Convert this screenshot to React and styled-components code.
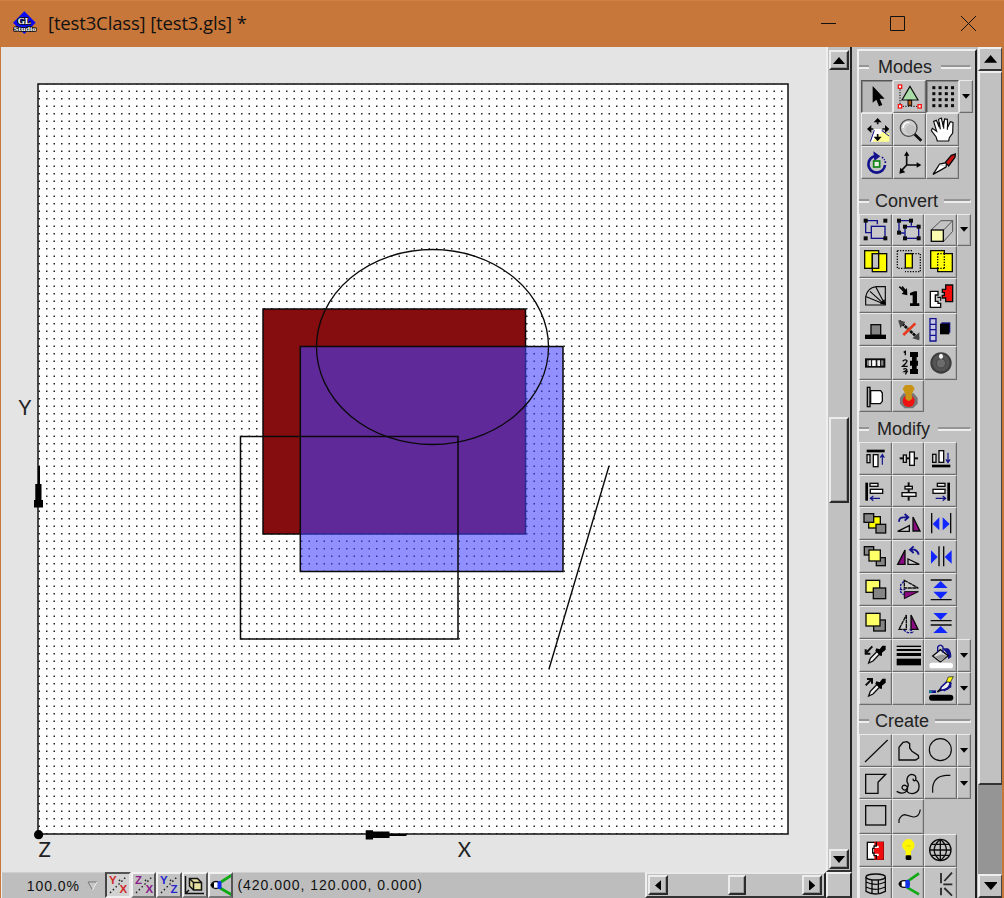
import React from "react";
import styled, { createGlobalStyle, css } from "styled-components";

const Global = createGlobalStyle`
  *, *::before, *::after { box-sizing: border-box; }
  html, body { margin: 0; width: 100%; height: 100%; overflow: hidden; }
  body { font-family: "Liberation Sans", Arial, sans-serif; color: #111; }
  svg { display: block; }
`;

const GREY = "#c1c1c1";

const Window = styled.div`
  width: 1004px;
  height: 898px;
  display: flex;
  flex-direction: column;
  background: #c8773b;
  overflow: hidden;
`;

const TitleBar = styled.header`
  flex: 0 0 47px;
  display: flex;
  align-items: center;
  padding: 0 0 2px 13px;
  border-top: 1px solid #d08145;
`;

const Title = styled.h1`
  flex: 1;
  margin: 0 0 0 11px;
  font: 400 18.5px/24px "Open Sans", "Noto Sans", sans-serif;
  letter-spacing: -0.15px;
  color: #111;
  white-space: pre;
`;

const WindowButtons = styled.div`
  display: flex;
  gap: 54px;
  padding-right: 27px;
  & > svg { overflow: visible; }
`;

const Body = styled.div`
  flex: 1;
  min-height: 0;
  display: flex;
  margin: 0 2px 0 1px;
  background: ${GREY};
`;

const Editor = styled.main`
  width: 851px;
  display: flex;
  flex-direction: column;
`;

const ViewRow = styled.div`
  height: 825px;
  display: flex;
`;

const Viewport = styled.div`
  width: 825px;
  height: 825px;
  background: #e4e4e4;
`;

const VerticalBar = styled.div`
  width: 26px;
  display: flex;
  flex-direction: column;
  align-items: center;
  padding: 3px 3px 1px 2px;
  background: ${GREY};
  border-left: 2px solid #efefef;
  border-right: 2px solid #222;
  border-bottom: 2px solid #333;
`;

const HorizontalBar = styled.div`
  width: 181px;
  display: flex;
  align-items: center;
  padding: 0 2px 0 1px;
  background: ${GREY};
  border-top: 2px solid #e8e8e8;
  border-left: 2px solid #efefef;
  border-right: 2px solid #222;
  border-bottom: 2px solid #333;
`;

const raised = css`
  background: #c2c2c2;
  border: 2px solid;
  border-color: #ececec #2b2b2b #2b2b2b #ececec;
  box-shadow: inset -1px -1px #999;
`;

const BarButton = styled.button`
  ${raised}
  flex: 0 0 auto;
  width: 20px;
  height: 20px;
  padding: 0;
  display: grid;
  place-items: center;
`;

const BarThumb = styled.div`
  ${raised}
  width: ${(p) => p.$w}px;
  height: ${(p) => p.$h}px;
`;

const Spacer = styled.div`
  flex: ${(p) => p.$size ? `0 0 ${p.$size}px` : "1"};
`;

const StatusRow = styled.footer`
  height: 26px;
  display: flex;
`;

const ZoomField = styled.div`
  width: 104px;
  display: flex;
  align-items: center;
  justify-content: flex-end;
  gap: 7px;
  padding: 0 7px 0 0;
  background: #bebebe;
  border-top: 1px solid #cfcfcf;
  border-left: 1px solid #efefef;
  font-size: 14px;
  letter-spacing: 0.95px;
`;

const ViewButton = styled.button`
  width: 25.7px;
  padding: 0;
  background: ${(p) => (p.$on ? "#d2d2d2" : "#c3c3c3")};
  border: 2px solid;
  border-color: ${(p) => (p.$on ? "#555 #e9e9e9 #eee #444" : "#f2f2f2 #555 #777 #f2f2f2")};
  overflow: hidden;
`;

const Coordinates = styled.div`
  flex: 1;
  padding: 0 0 0 4px;
  background: #bdbdbd;
  border-top: 1px solid #cfcfcf;
  font-size: 14px;
  line-height: 24px;
  letter-spacing: 0.97px;
  white-space: pre;
`;

const Corner = styled.div`
  width: 26px;
  background: #c4c4c4;
  border-top: 2px solid #eee;
  border-left: 2px solid #eee;
  border-right: 2px solid #222;
  border-bottom: 2px solid #333;
`;

const Palette = styled.aside`
  width: 120px;
  margin: 2px 0 0 5px;
  border-left: 2px solid #efefef;
  border-top: 2px solid #efefef;
  border-right: 2px solid #1c1c1c;
  display: flex;
  flex-direction: column;
  overflow: hidden;
`;

const Section = styled.section`
  flex: 0 0 auto;
  height: ${(p) => p.$h}px;
  padding-left: ${(p) => p.$indent || 0}px;
`;

const Heading = styled.h2`
  height: ${(p) => p.$h}px;
  margin: 0 0 0 ${(p) => -(p.$indent || 0)}px;
  padding-top: ${(p) => p.$top}px;
  width: 112px;
  display: flex;
  align-items: flex-start;
  gap: ${(p) => p.$gap}px;
  font-size: 18px;
  line-height: 20px;
  font-weight: 400;
  color: #222;

  &::before, &::after {
    content: "";
    height: 4px;
    margin-top: 8px;
    border-top: 2px solid #959595;
    border-bottom: 2px solid #ededed;
  }
  &::before { width: ${(p) => p.$lead}px; }
  &::after { flex: 1; border-right: 1px solid #ededed; }
`;

const Tools = styled.div`
  display: grid;
  grid-template-columns: 32.7px 32.7px 32.8px 14px;
  grid-template-rows: ${(p) => p.$rows};
`;

const Tool = styled.button`
  padding: 0;
  min-width: 0;
  min-height: 0;
  overflow: hidden;
  border: 1px solid;
  background: ${(p) => (p.$on ? "#b9b9b9" : "#c3c3c3")};
  border-color: ${(p) => (p.$on ? "#555 #e5e5e5 #e5e5e5 #555" : "#e9e9e9 #6c6c6c #6c6c6c #e9e9e9")};
  box-shadow: ${(p) => (p.$on ? "inset 1px 1px #888" : "inset -1px -1px #adadad")};
  display: grid;
  place-items: start;

  & > svg { margin: -1px; overflow: visible; }
`;

const Menu = styled(Tool)`
  place-items: center;
  & > svg { margin: 0; }
`;

const OuterBar = styled.div`
  width: 24px;
  margin-left: 1px;
  display: flex;
  flex-direction: column;
  background: #959595;
`;

const OuterPart = styled.div`
  flex: 0 0 ${(p) => p.$h}px;
  display: grid;
  place-items: center;
  background: ${GREY};
  border: solid;
  border-width: 2px 1px 2px 2px;
  border-color: #eee #444 #333 #eee;
`;

const ARROWS = {
  up: "M0 7 L6 0 L12 7Z",
  down: "M0 0 H12 L6 7Z",
  left: "M7 0 V12 L0 6Z",
  right: "M0 0 L7 6 L0 12Z",
};
const Arrow = ({ dir, s = 1 }) => {
  const side = dir === "left" || dir === "right";
  const w = side ? 7 : 12, h = side ? 12 : 7;
  return <svg width={w * s} height={h * s} viewBox={`0 0 ${w} ${h}`}><path d={ARROWS[dir]} /></svg>;
};

/* ---- icon helpers ---- */
const B = "#0b0b0b", N = "#12128c", Y = "#ffff00", PY = "#ffff66", G = "#858585", V = "#8a0a82", BL = "#1226ff";
const P = ({ d, c = B, f = "none", w = 4, ...r }) => <path d={d} stroke={c} fill={f} strokeWidth={w} {...r} />;
const R = ({ a, f = "none", c = B, w = 4, ...r }) => <rect x={a[0]} y={a[1]} width={a[2]} height={a[3]} fill={f} stroke={c} strokeWidth={w} {...r} />;
const S = ({ pts, f = B, s = 12 }) => pts.map(([x, y], i) => <rect key={i} x={x - s / 2} y={y - s / 2} width={s} height={s} fill={f} />);

/* icon units are thirds of a pixel; o is the origin of the button */
const MODES = [
  { on: 1, o: [20, 90], art: <path d="M55 108 V158 L66 149 L74 169 L84 165 L76 146 H91Z" /> },
  { o: [117, 90], art: <>
    <P d="M138 118 V164 M146 169 H190" w={3} strokeDasharray="4 4" />
    <P d="M168 109 L144 150 H192Z" f="#a8dba8" w={3.5} /><R a={[162, 151, 11, 15]} f="#b35b18" w={3} />
    {[[138, 110], [138, 169], [197, 169]].map(([x, y]) => <R key={x + y} a={[x - 5, y - 5, 10, 10]} f="#fff" c="#ff1717" />)}
  </> },
  { on: 1, menu: 1, o: [216, 90], art: <S s={9} pts={[0, 1, 2, 3].flatMap((i) => [0, 1, 2, 3].map((j) => [239.5 + i * 18.7, 113 + j * 18]))} /> },
  { o: [20, 188], art: <>
    <path d="M48 274 L62 236 L80 244 L105 249 V274Z" fill="#ffff91" />
    <path d="M48 274 L60 236 H82 V249 L62 262 L55 274Z" fill="#fff" />
    <P d="M48 274 L60 240 M82 240 L104 257" c={N} w={3} />
    <path d="M70 203 L82 216 H58Z M70 273 L58 259 H82Z M38 236 L51 224 V248Z M105 236 L92 224 V248Z" />
    <P d="M70 213 V222 M70 251 V262 M48 236 H57 M84 236 H94" w={5} />
  </> },
  { o: [117, 188], art: <><P d="M178 248 L202 271" w={8} /><circle cx="164" cy="233" r="25" fill="#cfcfcf" stroke="#444" strokeWidth="4" /><circle cx="170" cy="238" r="15" fill="#c1c1c1" /><P d="M147 233 Q149 215 166 216" c="#fff" /></> },
  { o: [216, 188], art: <P d="M250 272 L246 259 L232 241 L235 234 L248 243 L239 213 L247 210 L256 231 L254 207 L262 203 L268 230 L272 206 L280 207 L281 231 L289 214 L297 216 L296 248 L286 262 L284 272Z M256 216 L259 237 M269 212 V235 M281 216 L280 238" f="#fff" w={3.5} /> },
  { o: [20, 287], art: <><P d="M64 317 A25 25 0 1 0 92 344" c={N} w={8} /><path d="M57 303 L78 318 L60 332Z" fill={N} /><P d="M83 320 L91 329 M93 333 V340" c={N} w={5} strokeDasharray="5 4" /><R a={[58, 332, 18, 18]} f="#e8eee4" c="#138313" w={5} /></> },
  { o: [117, 287], art: <><P d="M158 314 V344 H190 M158 344 L143 360" w={5} /><path d="M158 303 L166 316 H150Z M202 344 L188 336 V352Z M136 370 L139 352 L154 366Z" /></> },
  { o: [216, 287], art: <><P d="M237 372 L257 341 L278 337 L276 350Z" f="#fff" w={4} /><P d="M274 336 L292 315 L304 311 L303 321 L284 347Z" f="#cb1212" w={4} /><P d="M257 343 L275 348" c="#aaa" w={2} /></> },
];

const CONVERT = [
  { o: [15, 86], art: <><P d="M35 106 H70 V117 M35 106 V142 H51" c={N} /><R a={[52, 123, 41, 36]} f="#c9c9c9" c={N} /><S pts={[[35, 106], [94, 106], [35, 159], [94, 159]]} /></> },
  { o: [113, 86], art: <><P d="M134 106 H171 V121 M134 106 V143 H151" c={N} /><R a={[152, 124, 41, 35]} f="#c9c9c9" c={N} /><S pts={[[134, 106], [170, 106], [134, 142], [152, 124], [193, 124], [152, 159], [193, 159]]} /></> },
  { menu: 1, o: [211, 86], art: <><P d="M233 133 L262 106 H297 V138 L270 168 M270 134 L297 106" c="#555" w={3} /><R a={[233, 134, 36, 34]} f="#fafbae" /></> },
  { o: [15, 183], art: <><R a={[32, 197, 42, 53]} f={Y} /><R a={[55, 206, 43, 54]} f={Y} /><R a={[55, 206, 19, 44]} f="#c1c1c1" /></> },
  { o: [113, 183], art: <><P d="M129 197 H175 M129 197 V250 H151 M175 206 H198 V260 H152" w={4} strokeDasharray="4 4" /><R a={[153, 206, 21, 43]} f={Y} /></> },
  { o: [211, 183], art: <><P d="M231 197 H272 V206 H296 V260 H252 V250 H231Z" f={Y} /><P d="M252 206 V250 M272 206 V250 M252 206 H272 M252 250 H272" w={4} strokeDasharray="4 4" /></> },
  { o: [15, 278], art: <><P d="M35 359 V334 Q40 308 66 304 H94 V359Z M37 334 L88 355 M48 318 L88 354 M66 306 L90 352" w={3.5} /><path d="M95 358 L78 356 L91 341Z" /></> },
  { o: [113, 278], art: <><P d="M135 304 L151 320 M143 304 L155 318" w={5} /><path d="M159 330 L142 326 L158 308Z" /><path d="M180 318 H188 V354 H195 V362 H167 V354 H175 V330 H167 V323Z" /></> },
  { o: [211, 278], art: <><P d="M230 318 H253 V329 H245 V348 H253 V354 H261 V366 H230Z" f="#fff" /><P d="M251 336 H261 V346" w={3.5} /><P d="M276 299 H297 V349 H276 V338 H266 V330 H272 V321 H266 V312 H276Z" f="#f20d0d" /></> },
  { o: [15, 26], art: <><R a={[51, 61, 29, 32]} f={G} /><rect x="33" y="91" width="63" height="13" /></> },
  { o: [113, 26], art: <><P d="M135 50 L193 103" w={8} strokeDasharray="9 2" /><path d="M132 47 L153 53 L138 71Z M195 84 V108 L174 102Z" fill="#444" /><P d="M147 92 L183 57" c="#e6391d" w={8} /></> },
  { o: [211, 26], art: <><P d="M229 43 H247 V110 H229Z M229 60 H247 M229 76 H247 M229 93 H247" f="#c7c7e3" c={N} w={4} /><rect x="263" y="54" width="27" height="31" fill={N} /><rect x="259" y="58" width="28" height="32" /></> },
  { o: [15, 125], art: <><R a={[36, 165, 55, 22]} f="#888" w={6} /><rect x="45" y="168" width="6" height="17" fill="#ddd" /><rect x="54" y="168" width="11" height="17" fill="#fff" /><rect x="71" y="168" width="7" height="17" fill="#eee" /><P d="M53 165 V187 M67 165 V187 M80 165 V187" w={3} /></> },
  { o: [113, 125], art: <><P d="M148 144 L153 141 V153 M145 171 Q153 163 158 170 Q158 174 145 186 H160 M147 195 Q154 190 158 197 L150 202 H158 L153 210" /><path d="M167 143 H191 V158 H187 V169 H191 V184 H187 V194 H191 V209 H167 V194 H173 V184 H167 V169 H173 V158 H167Z" /></> },
  { o: [211, 125], art: <><circle cx="262" cy="176" r="32" fill="#3c3c3c" /><circle cx="262" cy="175" r="26" fill="#555" /><circle cx="262" cy="177" r="14" fill="#6c6c6c" stroke="#444" strokeWidth="3" /><ellipse cx="262" cy="156" rx="6" ry="8" fill="#f6f6f6" /></> },
  { o: [15, 224], art: <><R a={[40, 246, 8, 58]} f="#aaa" /><P d="M50 256 H80 L85 263 V288 L79 295 H50Z" f="#fff" /></> },
  { o: [113, 224], art: <><path d="M147 264 H178 L190 278 V295 L176 309 H151 L137 295 V278Z" fill="#777" /><circle cx="163" cy="287" r="18" fill="#f01111" /><path d="M153 239 H173 L181 249 L172 268 L174 280 L163 288 L153 280 L154 268 L145 250Z" fill="#c99316" /></> },
];

const MODIFY = [
  { o: [15, 5], art: <><rect x="38" y="28" width="54" height="8" /><R a={[39, 43, 9, 24]} f="#ddd" /><R a={[58, 43, 14, 36]} f="#fff" /><P d="M85 73 V44 M79 52 L85 43 L91 52" c={N} w={3.5} /></> },
  { o: [113, 5], art: <><P d="M136 54 H191" w={6} /><R a={[147, 44, 9, 22]} f="#ddd" /><R a={[166, 35, 14, 40]} f="#fff" /></> },
  { o: [211, 5], art: <><R a={[237, 42, 10, 24]} f="#ddd" /><R a={[256, 31, 14, 35]} f="#fff" /><rect x="235" y="73" width="55" height="8" /><P d="M283 37 V65 M277 57 L283 67 L289 57" c={N} w={3.5} /></> },
  { o: [15, 104], art: <><rect x="34" y="127" width="8" height="54" /><R a={[48, 129, 24, 9]} f="#eee" /><R a={[49, 147, 37, 12]} f="#fff" /><P d="M50 174 H78 M58 167 L49 174 L58 181" c={N} w={3.5} /></> },
  { o: [113, 104], art: <><P d="M163 126 V181" w={6} /><R a={[152, 138, 22, 8]} f="#eee" /><R a={[143, 157, 42, 11]} f="#fff" /></> },
  { o: [211, 104], art: <><rect x="281" y="127" width="8" height="54" /><R a={[251, 129, 23, 9]} f="#eee" /><R a={[238, 147, 36, 12]} f="#fff" /><P d="M246 174 H275 M267 167 L276 174 L267 181" c={N} w={3.5} /></> },
  { o: [15, 204], art: <><R a={[44, 233, 35, 34]} f={Y} /><R a={[30, 224, 29, 26]} f={G} /><R a={[66, 256, 29, 26]} f={G} /></> },
  { o: [113, 204], art: <><P d="M134 248 Q134 235 148 235 H158 M151 225 L162 235 L151 245" c={N} w={5.5} /><P d="M130 277 L165 260 V277Z" f="#d3d3d3" /><P d="M176 234 V276 H197Z" f={V} /></> },
  { o: [211, 204], art: <><P d="M234 222 V283 M291 222 V283" /><path d="M257 235 V274 L237 255Z M267 235 V274 L288 255Z" fill={BL} /></> },
  { o: [15, 303], art: <><R a={[31, 323, 28, 25]} f={G} /><R a={[67, 356, 27, 24]} f={G} /><R a={[45, 333, 34, 33]} f={PY} /></> },
  { o: [113, 303], art: <><P d="M130 376 L152 333 V376Z" f={V} /><P d="M161 360 V376 H195Z" f="#d3d3d3" /><P d="M168 332 H181 Q191 336 193 347 M178 322 L167 332 L178 342" c={N} w={5.5} /></> },
  { o: [211, 303], art: <><P d="M256 322 V382 M270 322 V382" /><path d="M232 334 V374 L252 354Z M294 334 V374 L273 354Z" fill={BL} /></> },
  { o: [15, 10], art: <><R a={[36, 32, 41, 36]} f={PY} /><R a={[58, 55, 37, 32]} f={G} /></> },
  { o: [113, 10], art: <><P d="M150 32 L192 55 H150Z" f="#ccc" strokeDasharray="12 1.5" /><P d="M150 66 H192 L150 87Z" f={V} w={3} /><P d="M149 35 L139 45 V67 L148 75 M136 60 H153" c={N} strokeDasharray="8 3" /></> },
  { o: [211, 10], art: <><P d="M231 31 H294 M231 90 H294" /><path d="M261 34 L282 55 H239Z M239 66 H282 L261 88Z" fill={BL} /></> },
  { o: [15, 109], art: <><R a={[59, 151, 35, 33]} f={G} /><R a={[36, 131, 42, 38]} f={PY} /></> },
  { o: [113, 109], art: <><P d="M156 136 V179 H134Z" f="#ccc" strokeDasharray="12 1.5" /><P d="M170 136 V179 H191Z" f={V} /><P d="M148 181 L160 189 H174 M166 179 L177 188" c={N} strokeDasharray="8 3" /></> },
  { o: [211, 109], art: <><P d="M231 153 H294 M231 166 H294" /><path d="M239 130 H282 L261 151Z M261 169 L282 190 H239Z" fill={BL} /></> },
  { o: [15, 207], art: <><P d="M44 279 L49 265 L73 240 L80 249 L57 273Z" f="#eee" /><path d="M67 235 L77 238 L85 227 H95 V239 L84 248 V257 H78 L64 242Z" /><P d="M55 229 L36 249 M35 238 V251 H49" w={6} /></> },
  { o: [113, 207], art: <><rect x="127" y="227" width="73" height="4" /><rect x="127" y="237" width="73" height="6" /><rect x="127" y="249" width="73" height="9" /><rect x="127" y="266" width="73" height="20" /></> },
  { menu: 1, o: [211, 207], art: <><path d="M267 235 H283 Q293 241 293 261 L284 268 L279 250Z" fill={N} /><P d="M237 258 L260 239 L283 257 L260 276Z" f="#ddd" /><path d="M244 260 L263 274 L280 257 L265 253Z" fill="#999" /><P d="M252 246 V231 Q260 220 268 231 V248" c={N} /><rect x="227" y="278" width="71" height="17" rx="8" fill="#fff" /></> },
  { o: [15, 308], art: <><P d="M44 380 L49 366 L73 341 L80 350 L57 374Z" f="#eee" /><path d="M67 336 L77 339 L85 328 H95 V340 L84 349 V358 H78 L64 343Z" /><P d="M35 348 L52 331 M39 329 H54 V343" w={6} /></> },
  { o: [113, 308] },
  { menu: 1, o: [211, 308], art: <><P d="M258 364 L263 353 L283 334 L291 342 L281 359Z" f="#eee" c={N} w={5} /><P d="M270 364 L290 352 V338" c={N} w={6} /><path d="M278 337 L284 323 L299 322 L290 339Z" fill={Y} stroke={B} strokeWidth="2" /><P d="M226 367 H247" c={N} w={8} /><path d="M226 362 L238 368 L228 371Z" fill="#159b9b" /><P d="M251 368 L262 359" w={5} /><rect x="226" y="376" width="73" height="18" rx="9" /></> },
];

const CREATE = [
  { o: [15, 79], art: <P d="M33 163 L101 97" w={3.5} /> },
  { o: [113, 79], art: <P d="M134 157 V119 L146 104 L158 102 L166 108 V121 L173 131 L192 143 L193 151 L184 157Z" /> },
  { menu: 1, o: [211, 79], art: <circle cx="260" cy="126" r="33" fill="none" stroke={B} strokeWidth="3.5" /> },
  { o: [15, 177], art: <P d="M35 199 H95 L72 223 V256 H35Z" /> },
  { o: [113, 177], art: <P d="M127 250 Q147 262 158 248 Q163 236 153 232 Q143 230 143 240 Q150 251 157 243 Q166 231 158 222 Q156 202 171 199 Q188 200 184 216 Q177 222 176 212 M184 215 Q195 223 194 236 Q194 254 174 257 Q157 255 158 247" /> },
  { menu: 1, o: [211, 177], art: <P d="M237 254 V239 Q240 205 277 202 H290" w={3.5} /> },
  { o: [15, 277], art: <R a={[35, 297, 60, 58]} /> },
  { o: [113, 277], art: <P d="M134 349 V339 Q141 325 151 324 L177 331 Q194 332 198 309" w={3.5} /> },
  null,
  { o: [15, 380], art: <><R a={[40, 405, 48, 51]} f="#fff" /><path d="M61 403 H89 V457 H61 V446 H74 V439 H60 V422 H74 V415 H61Z" fill="#f00d0d" /><P d="M67 404 V416 H60 V423 H56 V437 H60 V445 H67 V456" w={4} /></> },
  { o: [113, 380], art: <><path d="M155 396 H170 L180 408 V420 L170 432 V445 H154 V432 L144 420 V408Z" fill="#fff600" /><P d="M155 416 H170" c="#ccc500" w={2} /><rect x="154" y="444" width="17" height="14" rx="4" /></> },
  { o: [211, 380], art: <><circle cx="260" cy="428" r="32" fill="none" stroke={B} strokeWidth="4" /><P d="M228 428 H292 M233 411 H287 M233 444 H287 M260 396 V460 M260 396 Q223 428 260 460 M260 396 Q297 428 260 460" w={4} /></> },
  { o: [15, 478], art: <><ellipse cx="65" cy="508" rx="29" ry="9" fill="none" stroke={B} strokeWidth="4" /><P d="M36 508 V551 Q64 567 94 551 V508 M36 523 Q64 537 94 523 M36 538 Q64 552 94 538 M54 516 V559 M73 516 V559" /></> },
  { o: [113, 478], art: <><P d="M194 497 L163 519 M158 539 L194 560" c="#12a916" w={8} /><ellipse cx="150" cy="529" rx="15" ry="10" fill="#fff" stroke={B} strokeWidth="4" /><rect x="153" y="516" width="13" height="26" rx="5" fill="#1232e8" /><path d="M132 529 L142 520 V538Z" /></> },
  { o: [211, 478], art: <P d="M262 496 V527 M262 540 V563 M295 495 L272 520 M269 530 H296 M272 541 L295 564" c="#2a2a2a" w={5.5} /> },
];

const Icon = ({ o, children }) => (
  <svg width="33" height="33" viewBox={`${o[0]} ${o[1]} 99 99`}>{children}</svg>
);

const ToolGrid = ({ tools, rows }) => (
  <Tools $rows={rows}>
    {tools.map((t, i) => t && (
      <React.Fragment key={i}>
        <Tool $on={t.on} style={{ gridColumn: (i % 3) + 1, gridRow: Math.floor(i / 3) + 1 }}>
          <Icon o={t.o}>{t.art}</Icon>
        </Tool>
        {t.menu && <Menu style={{ gridColumn: 4, gridRow: Math.floor(i / 3) + 1 }}><Arrow dir="down" s={0.68} /></Menu>}
      </React.Fragment>
    ))}
  </Tools>
);

const Logo = () => (
  <svg width="24" height="24" viewBox="0 0 72 72">
    <path d="M34 1 L68 35 L34 69 L0 35Z" fill="#0b0bed" />
    <g fontFamily="Liberation Serif, serif" fontWeight="700" textAnchor="middle" stroke="#111" strokeWidth="5" paintOrder="stroke" fill="#fff">
      <text x="34" y="39" fontSize="25" textLength="40" lengthAdjust="spacingAndGlyphs">GL</text>
      <text x="36" y="59" fontSize="17" textLength="68" lengthAdjust="spacingAndGlyphs">Studio</text>
    </g>
  </svg>
);

const Scene = () => (
  <svg width="825" height="825" viewBox="1 47 825 825">
    <defs>
      <pattern id="dots" x="38" y="83" width="15" height="15" patternUnits="userSpaceOnUse">
        <path d="M.5 0h1.5v1.5h-1.5z M8 0h1.5v1.5h-1.5z M.5 7.5h1.5v1.5h-1.5z M8 7.5h1.5v1.5h-1.5z" fill="#222" />
      </pattern>
    </defs>
    <rect x="38" y="84" width="750" height="750" fill="#fff" />
    <rect x="38" y="84" width="750" height="750" fill="url(#dots)" />
    <rect x="38" y="84" width="750" height="750" fill="none" stroke="#111" strokeWidth="1.5" />
    <g stroke="#0a0a0a" strokeWidth="1.5" fill="none">
      <rect x="263" y="309" width="262.5" height="225" fill="#850d0f" />
      <rect x="300.3" y="346.5" width="262.7" height="225" fill="rgba(67,62,255,.58)" />
      <rect x="240.5" y="436.5" width="217.5" height="202.5" />
      <ellipse cx="432.5" cy="347" rx="116" ry="97.5" strokeWidth="1.3" />
      <path d="M609 466 L549 669" strokeWidth="1.4" />
    </g>
    <path d="M34 500h9v7.5h-9z M35.3 484h6.2v16h-6.2z M38 466h2v18h-2z M365.7 830.3h7.3v9.2h-7.3z M373 831.5h16.5v6.5h-16.5z M389 834h17.5v2h-17.5z" />
    <circle cx="38.6" cy="834.7" r="4.6" />
    <g fontFamily="Lato, sans-serif" fontWeight="400" fontSize="20.5" fill="#222" textAnchor="middle">
      <text x="25" y="414.7">Y</text>
      <text x="464.5" y="857.3">X</text>
      <text x="44.7" y="857.3">Z</text>
    </g>
  </svg>
);

const PlaneArt = ({ a, b, c }) => (
  <svg width="22" height="22" viewBox="0 0 22 22">
    <path d="M3 19 L19 3 M12 7l2 -2" stroke="#222" strokeWidth="1.4" strokeDasharray="1.6 2.4" />
    <g fontFamily="Liberation Sans, sans-serif" fontSize="11.5" fontWeight="700" fill={c}>
      <text x="2" y="9.5">{a}</text><text x="12.5" y="19">{b}</text>
    </g>
  </svg>
);

export default function App() {
  return (
    <Window>
      <Global />
      <TitleBar>
        <Logo />
        <Title>[test3Class] [test3.gls] *</Title>
        <WindowButtons>
          {["M0 8.5H15", "M-.5 1.5H13.5V15.5H-.5Z", "M0 1L15 16M15 1L0 16"].map((d) => (
            <svg key={d} width="16" height="17"><path d={d} fill="none" stroke="#111" strokeWidth="1" /></svg>
          ))}
        </WindowButtons>
      </TitleBar>
      <Body>
        <Editor>
          <ViewRow>
            <Viewport><Scene /></Viewport>
            <VerticalBar>
              <BarButton><Arrow dir="up" /></BarButton>
              <Spacer $size={347} />
              <BarThumb $w={20} $h={86} />
              <Spacer />
              <BarButton><Arrow dir="down" /></BarButton>
            </VerticalBar>
          </ViewRow>
          <StatusRow>
            <ZoomField>
              <span>100.0%</span>
              <svg width="11" height="10" viewBox="0 0 11 10"><path d="M1 1H10L5.5 9Z" fill="#c9c9c9" stroke="#777" /><path d="M10 1L5.5 9" stroke="#fff" /></svg>
            </ZoomField>
            <ViewButton $on><PlaneArt a="Y" b="X" c="#d02a2a" /></ViewButton>
            <ViewButton><PlaneArt a="Z" b="X" c="#8b1a8b" /></ViewButton>
            <ViewButton><PlaneArt a="Y" b="Z" c="#2525cc" /></ViewButton>
            <ViewButton>
              <svg width="22" height="22" viewBox="0 0 22 22"><path d="M1.5 2V19.5H20M1.5 19.5L5 16" fill="none" stroke="#111" strokeWidth="1.5" /><path d="M5.5 4.500H13.500L17.500 8.500V16H9.500L5.500 12Z" fill="#e7e2a0" stroke="#111" strokeWidth="1.5" /><path d="M5.500 4.500L9.500 8.500H17.500M9.500 8.500V16" fill="none" stroke="#111" strokeWidth="1.5" /></svg>
            </ViewButton>
            <ViewButton>
              <svg width="22" height="22" viewBox="0 0 22 22"><path d="M22 1L11 8M10 14L22 21" stroke="#0dab13" strokeWidth="2.8" /><ellipse cx="6" cy="11" rx="4.5" ry="3.5" fill="#fff" stroke="#111" strokeWidth="1.3" /><rect x="7.5" y="7" width="4" height="8" rx="1.5" fill="#1431e5" /><path d="M0 11L4 8V14Z" /></svg>
            </ViewButton>
            <Coordinates>(420.000, 120.000, 0.000)</Coordinates>
            <HorizontalBar>
              <BarButton><Arrow dir="left" s={0.9} /></BarButton>
              <Spacer $size={60} />
              <BarThumb $w={18} $h={20} />
              <Spacer />
              <BarButton><Arrow dir="right" s={0.9} /></BarButton>
            </HorizontalBar>
            <Corner />
          </StatusRow>
        </Editor>
        <Palette>
          <Section $h={132} $indent={1.7}>
            <Heading $h={29} $top={6} $lead={10} $gap={9} $indent={1.7}>Modes</Heading>
            <ToolGrid tools={MODES} rows="33px 33px 33px" />
          </Section>
          <Section $h={230}>
            <Heading $h={30.7} $top={8} $lead={10} $gap={6}>Convert</Heading>
            <ToolGrid tools={CONVERT} rows="32px 32px 35.3px 33.3px 33.4px 32.6px" />
          </Section>
          <Section $h={291}>
            <Heading $h={28.7} $top={6} $lead={10} $gap={8}>Modify</Heading>
            <ToolGrid tools={MODIFY} rows="repeat(8, 32.9px)" />
          </Section>
          <Section $h={200}>
            <Heading $h={30} $top={7} $lead={10} $gap={6}>Create</Heading>
            <ToolGrid tools={CREATE} rows="32.700px 32.700px 35px 32.700px 33px" />
          </Section>
        </Palette>
        <OuterBar>
          <OuterPart $h={24}><Arrow dir="up" s={1.1} /></OuterPart>
          <OuterPart $h={714} />
          <Spacer />
          <OuterPart $h={24}><Arrow dir="down" s={1.15} /></OuterPart>
        </OuterBar>
      </Body>
    </Window>
  );
}
